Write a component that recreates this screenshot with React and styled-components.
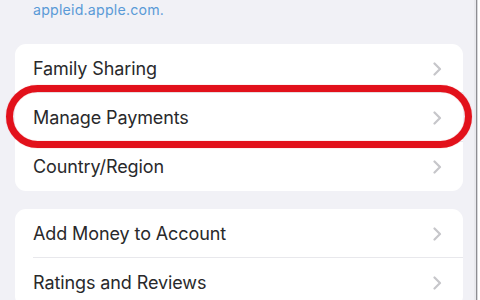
import React from "react";
import styled, { createGlobalStyle } from "styled-components";

const Global = createGlobalStyle`
  html, body { margin: 0; padding: 0; background: #f1f1f6; }
  body { font-family: Inter, "Noto Sans", "Liberation Sans", sans-serif; -webkit-font-smoothing: antialiased; }
`;

const Frame = styled.div`
  display: flex;
  width: 480px;
  height: 300px;
  overflow: hidden;
  background: #f1f1f6;
`;

const Screen = styled.div`
  position: relative;
  flex: 1;
  display: flex;
  flex-direction: column;
  padding: 0 11px 0 15px;
  & > * { flex-shrink: 0; }
`;

const Edge = styled.div`
  width: 6px;
  flex: none;
  background: linear-gradient(to right, #e9e9ee 0 2px, #8d8d92 2px 3px, #d8d8dc 3px 4px, #ffffff 4px 6px);
`;

const Caption = styled.div`
  height: 44px;
  padding-left: 18px;
  padding-top: 1px;
  box-sizing: border-box;
  font-size: 14.2px;
  line-height: 18px;
  color: #5a9ad6;
  letter-spacing: 0.2px;
`;

const Card = styled.div`
  background: #ffffff;
  border-radius: 11px;
  margin-bottom: ${(p) => p.$gap || 0}px;
  overflow: hidden;
`;

const Row = styled.div`
  height: 49px;
  display: flex;
  align-items: center;
  padding-left: 18px;
  position: relative;
  &:not(:last-child)::after {
    content: "";
    position: absolute;
    left: 18px;
    right: 0;
    bottom: 0;
    height: 1px;
    background: #e8e8ec;
  }
`;

const Label = styled.span`
  flex: 1;
  font-size: 18px;
  color: #29292b;
  letter-spacing: -0.1px;
`;

const Chevron = styled.svg`
  width: 9px;
  height: 14px;
  margin-right: 21px;
  flex: none;
`;

const Highlight = styled.div`
  position: absolute;
  left: 6px;
  top: 85px;
  width: 466px;
  height: 63px;
  box-sizing: border-box;
  border: 7px solid #e2111b;
  border-radius: 32px;
  box-shadow: 0 0 1px rgba(226, 17, 27, 0.6), inset 0 0 1px rgba(226, 17, 27, 0.6);
  pointer-events: none;
`;

const Arrow = () => (
  <Chevron viewBox="0 0 9 14">
    <polyline points="1.5,1.5 7,7 1.5,12.5" fill="none" stroke="#c6c6ca" strokeWidth="2.2" strokeLinecap="round" strokeLinejoin="round" />
  </Chevron>
);

const Item = ({ children }) => (
  <Row>
    <Label>{children}</Label>
    <Arrow />
  </Row>
);

export default function App() {
  return (
    <Frame>
      <Global />
      <Screen>
        <Caption>appleid.apple.com.</Caption>
        <Card $gap={18}>
          <Item>Family Sharing</Item>
          <Item>Manage Payments</Item>
          <Item>Country/Region</Item>
        </Card>
        <Card>
          <Item>Add Money to Account</Item>
          <Item>Ratings and Reviews</Item>
        </Card>
        <Highlight />
      </Screen>
      <Edge />
    </Frame>
  );
}
